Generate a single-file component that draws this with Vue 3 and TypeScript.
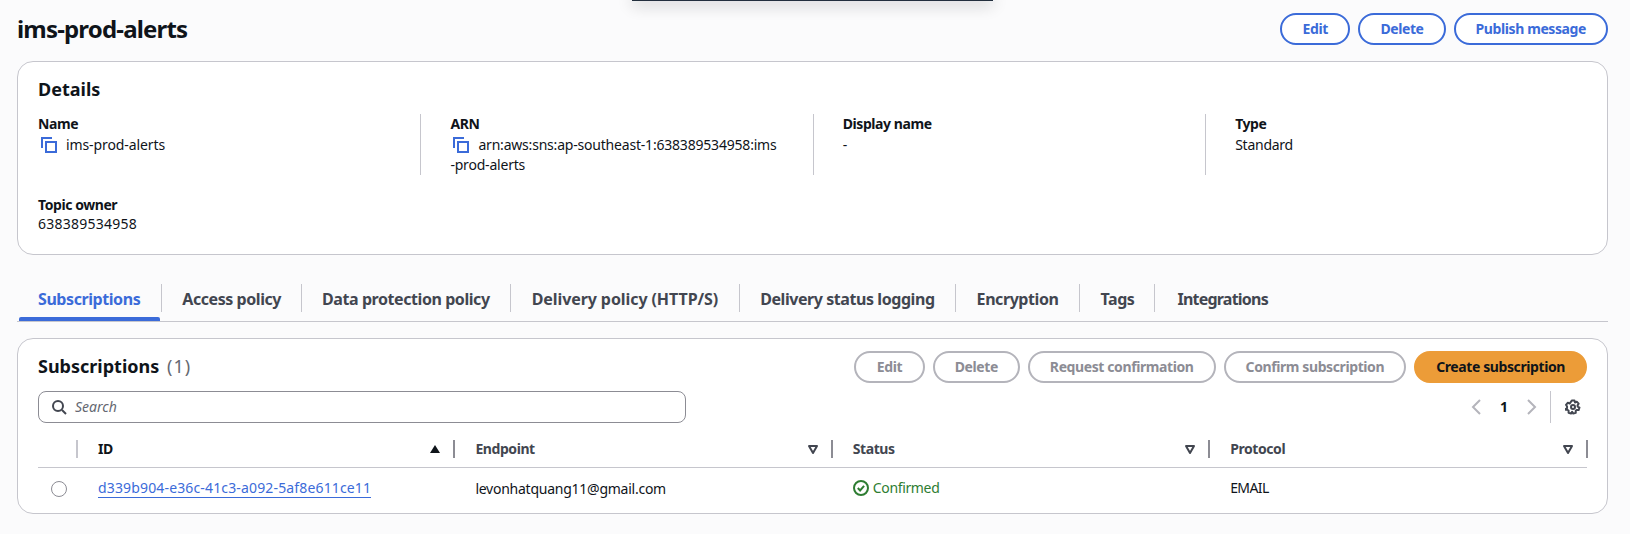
<script setup lang="ts">
const tabs: string[] = ['Subscriptions', 'Access policy', 'Data protection policy', 'Delivery policy (HTTP/S)', 'Delivery status logging', 'Encryption', 'Tags', 'Integrations']
const columns: string[] = ['Endpoint', 'Status', 'Protocol']
const tableActions: string[] = ['Edit', 'Delete', 'Request confirmation', 'Confirm subscription']
</script>

<template>
  <div class="page">
    <div class="flash"></div>
    <header class="head">
      <h1>ims-prod-alerts</h1>
      <div class="actions">
        <button class="btn">Edit</button>
        <button class="btn">Delete</button>
        <button class="btn">Publish message</button>
      </div>
    </header>

    <section class="card details">
      <h2>Details</h2>
      <div class="kv">
        <div class="cell">
          <div class="label">Name</div>
          <div class="value name-value">
            <svg class="copy" viewBox="0 0 16 16" width="16" height="16" fill="none"><path d="M1 11V1h10" /><rect x="5" y="5" width="10" height="10" /></svg><span>ims-prod-alerts</span>
          </div>
        </div>
        <div class="cell">
          <div class="label">ARN</div>
          <div class="value arn">
            <svg class="copy" viewBox="0 0 16 16" width="16" height="16" fill="none"><path d="M1 11V1h10" /><rect x="5" y="5" width="10" height="10" /></svg><span>arn:aws:sns:ap-southeast-1:638389534958:ims<br />-prod-alerts</span>
          </div>
        </div>
        <div class="cell">
          <div class="label">Display name</div>
          <div class="value">-</div>
        </div>
        <div class="cell">
          <div class="label">Type</div>
          <div class="value std">Standard</div>
        </div>
        <div class="cell owner">
          <div class="label">Topic owner</div>
          <div class="value digits">638389534958</div>
        </div>
      </div>
    </section>

    <nav class="tabs">
      <a v-for="(t, i) in tabs" :key="t" class="tab" :class="{ active: i === 0 }"><span>{{ t }}</span></a>
    </nav>

    <section class="card subs">
      <div class="subs-head">
        <h2>Subscriptions <span class="count">(1)</span></h2>
        <div class="actions">
          <button v-for="a in tableActions" :key="a" class="btn off">{{ a }}</button>
          <button class="btn primary">Create subscription</button>
        </div>
      </div>

      <div class="tools">
        <label class="search">
          <svg viewBox="0 0 16 16" width="16" height="16" fill="none" stroke="#424650" stroke-width="2"><circle cx="7" cy="7" r="5" /><path d="M11 11l4 4" /></svg>
          <span>Search</span>
        </label>
        <div class="pager">
          <svg viewBox="0 0 16 16" width="16" height="16" fill="none" stroke="#b4b4bb" stroke-width="2"><path d="M12 1L5 8l7 7" /></svg>
          <b>1</b>
          <svg viewBox="0 0 16 16" width="16" height="16" fill="none" stroke="#b4b4bb" stroke-width="2"><path d="M4 1l7 7-7 7" /></svg>
          <i class="sep"></i>
          <svg class="gear" viewBox="0 0 16 16" width="16" height="16" fill="none" stroke="#424650" stroke-width="2" stroke-linejoin="round">
            <path d="M6.6 1.5h2.8l.5 2 1.8-.9 1.9 2.1-1.1 1.7.1 1.2 1.9 1-.9 2.6-2.1-.1-.9.9.1 2.1-2.7.7-1-1.8H6.9l-1 1.8-2.6-.9.1-2.1-.9-.8-2-.1L0 10.3l1.8-1v-1.8L.7 5.8l1.9-2.1 1.8.9z" transform="translate(.3 .1) scale(.98)" />
            <circle cx="8" cy="8" r="2" />
          </svg>
        </div>
      </div>

      <div class="row th">
        <div class="c sel"></div>
        <div class="c">
          <span class="name">ID</span>
          <svg class="sort" viewBox="0 0 12 12" width="12" height="12"><path d="M6 2l5 8H1z" fill="#0f141a" /></svg>
        </div>
        <div v-for="c in columns" :key="c" class="c">
          <span class="name">{{ c }}</span>
          <svg class="sort" viewBox="0 0 12 12" width="12" height="12" fill="none" stroke="#424650" stroke-width="2" stroke-linejoin="round"><path d="M2 3h8L6 10z" /></svg>
        </div>
      </div>
      <div class="row td">
        <div class="c sel"><span class="radio"></span></div>
        <div class="c"><a class="link">d339b904-e36c-41c3-a092-5af8e611ce11</a></div>
        <div class="c email">levonhatquang11@gmail.com</div>
        <div class="c ok">
          <svg viewBox="0 0 16 16" width="16" height="16" fill="none" stroke="#2e7d32" stroke-width="2"><circle cx="8" cy="8" r="7" /><path d="M4.8 8l2.3 2.4 4-4.6" /></svg>
          <span>Confirmed</span>
        </div>
        <div class="c mail">EMAIL</div>
      </div>
    </section>
  </div>
</template>

<style>
html, body { margin: 0; background: #fbfbfc; }
</style>

<style scoped>
.page {
  position: relative;
  width: 1630px;
  height: 534px;
  box-sizing: border-box;
  padding: 13px 22px 0 17px;
  overflow: hidden;
  background: #fbfbfc;
  color: #0f141a;
  font: 14px/20px "Noto Sans", sans-serif;
}
.flash {
  position: absolute;
  left: 632px;
  top: -8px;
  width: 361px;
  height: 9px;
  background: #232f3e;
  box-shadow: 0 4px 16px rgba(15, 20, 26, 0.2);
}
.head { display: flex; justify-content: space-between; align-items: center; height: 32px; }
h1 { margin: 0; font-size: 24px; line-height: 32px; font-weight: 700; letter-spacing: -0.82px; }
h2 { margin: 0; font-size: 18px; line-height: 28px; font-weight: 700; }
.actions { display: flex; gap: 8px; }
.btn {
  box-sizing: border-box;
  height: 32px;
  padding: 0 20px;
  border: 2px solid #3b6bd9;
  border-radius: 20px;
  background: #fff;
  color: #3b6bd9;
  font: 700 14px/20px "Noto Sans", sans-serif;
  letter-spacing: -0.4px;
}
.btn:first-child { padding: 0 20.5px; }
.btn.off { border-color: #b4b4bb; color: #8c8c94; }
.btn.primary { border-color: #ec9c38; background: #ec9c38; color: #0f141a; }
.card {
  box-sizing: border-box;
  background: #fff;
  border: 1px solid #c6c6cd;
  border-radius: 16px;
}
.details { height: 194px; margin-top: 16px; padding: 13px 20px 0; }
.kv {
  display: grid;
  grid-template-columns: repeat(4, 392.4px);
  row-gap: 20px;
  margin: 11px 0 0 -10px;
}
.cell { box-sizing: border-box; min-height: 60px; padding-left: 29px; border-left: 1px solid #c6c6cd; }
.cell:first-child, .owner { padding-left: 10px; border-left: 0; }
.owner { min-height: 40px; }
.cell:not(.owner) .value { margin-top: 1px; }
.owner .value { margin-top: -1px; }
.label { font-weight: 700; letter-spacing: -0.43px; }
.copy { margin: 0 9px 0 3px; vertical-align: -3px; stroke: #3b6bd9; stroke-width: 2; }
.name-value { letter-spacing: -0.1px; }
.arn { letter-spacing: -0.2px; }
.std { letter-spacing: -0.26px; }
.digits { letter-spacing: 0.25px; }
.tabs { display: flex; height: 38px; box-sizing: border-box; margin-top: 29px; border-bottom: 1px solid #c6c6cd; }
.tab {
  position: relative;
  display: block;
  padding: 0 20px;
  color: #424650;
  font-size: 16px;
  line-height: 30px;
  font-weight: 700;
  letter-spacing: -0.43px;
  height: 28px;
  border-right: 1px solid #c6c6cd;
  white-space: nowrap;
}
.tab:first-child { padding: 0 21px; }
.tab:nth-child(4) { padding: 0 21px; letter-spacing: -0.08px; }
.tab:nth-child(6) { padding: 0 21px; }
.tab:last-child { padding-left: 22px; border-right: 0; letter-spacing: -0.78px; }
.tab.active { color: #3b6bd9; }
.tab.active::after {
  content: "";
  position: absolute;
  left: 2px;
  right: 1px;
  top: 33px;
  height: 4px;
  border-radius: 2px 2px 0 0;
  background: #3b6bd9;
}
.subs { height: 176px; margin-top: 16px; padding: 12px 20px 0; }
.subs-head { display: flex; justify-content: space-between; align-items: center; height: 32px; }
.subs-head h2 { margin-top: -2px; }
.count { margin-left: 3px; color: #656871; font-weight: 400; letter-spacing: 1px; }
.tools { display: flex; justify-content: space-between; margin-top: 8px; height: 32px; }
.search {
  box-sizing: border-box;
  display: flex;
  align-items: center;
  gap: 8px;
  width: 648px;
  padding-left: 12px;
  border: 1px solid #8c8c94;
  border-radius: 8px;
  color: #656871;
  font-style: italic;
}
.pager { display: flex; align-items: center; }
.pager b { width: 12px; margin: 0 14px; text-align: center; font-weight: 700; }
.sep { width: 1px; height: 32px; margin: 0 14px 0 10px; background: #c6c6cd; }
.gear { margin-right: 6px; }
.row { display: grid; grid-template-columns: 40px repeat(4, 377.4px); }
.th { height: 45px; padding-top: 8px; align-items: center; border-bottom: 1px solid #c6c6cd; box-sizing: border-box; color: #424650; font-weight: 700; letter-spacing: -0.43px; }
.th .c {
  display: flex;
  align-items: center;
  justify-content: space-between;
  box-sizing: border-box;
  height: 18px;
  padding: 0 12px 0 20px;
  border-right: 2px solid #8c8c94;
}
.th .sel { border-right-color: #c6c6cd; padding: 0; }
.th .c:nth-child(2) .name { color: #0f141a; }
.td { align-items: center; height: 41px; }
.td .c { box-sizing: border-box; padding-left: 20px; display: flex; align-items: center; white-space: nowrap; }
.td .sel { padding-left: 13px; }
.radio { box-sizing: border-box; width: 16px; height: 16px; border: 1px solid #8c8c94; border-radius: 50%; }
.link { color: #3b6bd9; border-bottom: 1px solid #3b6bd9; line-height: 18px; letter-spacing: 0.15px; }
.email { letter-spacing: -0.25px; }
.ok { color: #2e7d32; gap: 4px; margin-bottom: 2px; letter-spacing: -0.35px; }
.mail { margin-bottom: 2px; letter-spacing: -0.6px; }
</style>
